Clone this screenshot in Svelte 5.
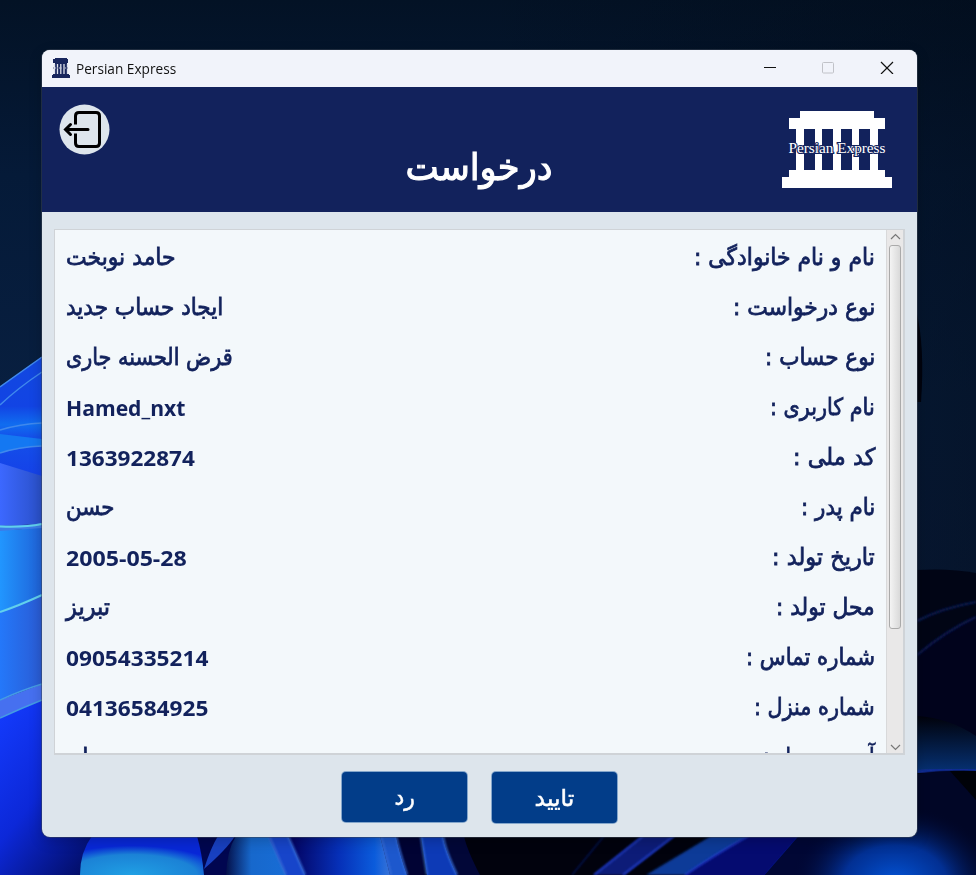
<script>
  const rows = [
    { label: 'نام و نام خانوادگی :', lw: 181, value: 'حامد نوبخت', vw: 110 },
    { label: 'نوع درخواست :', lw: 142, value: 'ایجاد حساب جدید', vw: 157 },
    { label: 'نوع حساب :', lw: 110, value: 'قرض الحسنه جاری', vw: 167 },
    { label: 'نام کاربری :', lw: 105, value: 'Hamed_nxt', vw: 119, latin: true },
    { label: 'کد ملی :', lw: 82, value: '1363922874', vw: 129, latin: true },
    { label: 'نام پدر :', lw: 74, value: 'حسن', vw: 48 },
    { label: 'تاریخ تولد :', lw: 103, value: '2005-05-28', vw: 121, latin: true },
    { label: 'محل تولد :', lw: 99, value: 'تبریز', vw: 44 },
    { label: 'شماره تماس :', lw: 129, value: '09054335214', vw: 142, latin: true },
    { label: 'شماره منزل :', lw: 121, value: '04136584925', vw: 142, latin: true },
    { label: 'آدرس منزل :', lw: 112, value: 'تهران', vw: 51 }
  ];

  // Condenses or widens a line of text to the given width.
  function fit(node, width) {
    node.style.transform = `scaleX(${width / node.offsetWidth})`;
  }
</script>

<div class="desktop">
  <svg class="wallpaper" width="976" height="875" viewBox="0 0 976 875">
    <defs>
      <linearGradient id="sky" x1="0" y1="0" x2="0" y2="1">
        <stop offset="0" stop-color="#031225" /><stop offset=".2" stop-color="#051a38" />
        <stop offset=".45" stop-color="#081f40" /><stop offset=".66" stop-color="#0a1e40" />
      </linearGradient>
      <linearGradient id="skyr" x1="0" x2="1">
        <stop offset=".5" stop-color="#020b18" stop-opacity="0" /><stop offset="1" stop-color="#020b18" stop-opacity=".5" />
      </linearGradient>
      <linearGradient id="p1" x1="0" y1="0" x2="0" y2="1">
        <stop offset="0" stop-color="#1248e0" /><stop offset=".4" stop-color="#1244e4" /><stop offset=".55" stop-color="#106df0" /><stop offset=".65" stop-color="#1450ea" /><stop offset="1" stop-color="#1540e8" />
      </linearGradient>
      <linearGradient id="p2" x1="0" x2="1"><stop offset="0" stop-color="#3c68ff" /><stop offset="1" stop-color="#2a50c8" /></linearGradient>
      <linearGradient id="p3" x1="0" x2="1"><stop offset="0" stop-color="#2196ff" /><stop offset="1" stop-color="#1f62d8" /></linearGradient>
      <linearGradient id="p4" x1="0" x2="1"><stop offset="0" stop-color="#2478fa" /><stop offset="1" stop-color="#2a5bd4" /></linearGradient>
      <linearGradient id="p5" x1="0" y1="0" x2=".8" y2="1">
        <stop offset="0" stop-color="#143cff" /><stop offset=".5" stop-color="#0c28d8" /><stop offset="1" stop-color="#020c60" />
      </linearGradient>
      <radialGradient id="teal" cx=".42" cy="1" r=".75"><stop offset="0" stop-color="#20a0e4" /><stop offset=".7" stop-color="#1b82d6" /><stop offset="1" stop-color="#0828d8" /></radialGradient>
      <linearGradient id="petal" x1="0" x2="1"><stop offset="0" stop-color="#04104a" /><stop offset=".3" stop-color="#1768cc" /><stop offset="1" stop-color="#1870dc" /></linearGradient>
      <linearGradient id="fold" x1="0" x2="1"><stop offset="0" stop-color="#03005c" /><stop offset=".5" stop-color="#0630b8" /><stop offset=".85" stop-color="#0b5cdc" /><stop offset="1" stop-color="#3974d8" /></linearGradient>
      <linearGradient id="arc" x1="0" y1="0" x2="0" y2="1"><stop offset="0" stop-color="#01020b" /><stop offset="1" stop-color="#063275" /></linearGradient>
      <radialGradient id="glow"><stop offset="0" stop-color="#0357dc" /><stop offset=".5" stop-color="#023aae" stop-opacity=".8" /><stop offset="1" stop-color="#010628" stop-opacity="0" /></radialGradient>
      <filter id="soft"><feGaussianBlur stdDeviation="1" /></filter>
    </defs>
    <rect width="976" height="875" fill="url(#sky)" />
    <rect width="976" height="875" fill="url(#skyr)" />
    <path d="M916 310Q925 345 921 402H916Z" fill="#01030d" />

    <path d="M0 387L42 357V480H0Z" fill="url(#p1)" />
    <path d="M0 434L42 439V446Q18 448 0 453Z" fill="#1478f2" />
    <path d="M0 463L42 476V524L0 526Z" fill="url(#p2)" />
    <path d="M0 530Q25 530 42 526V595L0 612Z" fill="url(#p3)" />
    <path d="M0 525Q25 526 42 523V528L0 531Z" fill="#3c7ce8" />
    <path d="M0 612L42 595V684L0 700Z" fill="url(#p4)" />
    <path d="M0 700L42 684V700L0 718Z" fill="#4670f0" />
    <path d="M0 718L42 700V820L110 837V875H0Z" fill="url(#p5)" />
    <g fill="none" stroke-width="1.5">
      <path d="M0 387L42 357M0 405Q18 388 42 372M0 430Q20 424 42 423M0 453Q18 447 42 446" stroke="#4089ed" />
      <path d="M0 526.500Q25 527.500 42 524M0 612Q18 606 42 595" stroke="#61d0ed" stroke-width="2" />
      <path d="M0 700Q22 690 42 684M0 718Q22 708 42 700" stroke="#459be4" />
    </g>

    <rect x="110" y="835" width="866" height="40" fill="#01020d" />
    <rect x="190" y="836" width="50" height="39" fill="#010650" />
    <path d="M92 836Q80 852 80 875H204Q202 853 197 836Z" fill="url(#teal)" />
    <path d="M236 836Q227 850 226 875H310L288 836Z" fill="url(#petal)" />
    <path d="M204 869Q211 847 218 836H235Q227 849 204 869Z" fill="#1840c0" />
    <path d="M268 836L286 875H305L288 836Z" fill="#1745ca" />
    <path d="M288 836L305 875H390L380 836Z" fill="url(#fold)" />
    <path d="M380 836L390 875H407Q399 852 396 836Z" fill="#1d58cd" />
    <path d="M396 836Q399 852 407 875H425Q421 850 421 836Z" fill="#010334" />
    <path d="M421 836L427 875H457Q445 850 443 836Z" fill="#0d3ab6" />
    <path d="M443 836Q445 850 457 875H480Q467 850 464 836Z" fill="#020738" />
    <g fill="none" stroke="#356ad5" stroke-width="2" filter="url(#soft)">
      <path d="M269 836L286 875M288 836L305 875M381 836L391 875M396 836Q399 850 407 875M421 836L427 875M443 836Q445 850 457 875" />
    </g>
    <path d="M643 836L594 875H624L674 836Z" fill="#081d78" filter="url(#soft)" />
    <path d="M711 836L646 875H686L748 836Z" fill="#0b3b98" filter="url(#soft)" />
    <path d="M748 836Q711 857 685 875H765L799 836Z" fill="#050b70" />
    <g fill="none" filter="url(#soft)">
      <path d="M643 836L594 875M674 836L623 875M748 836Q711 857 685 875" stroke="#233fd2" stroke-width="2" />
      <path d="M604 836L572 875M799 836L765 875" stroke="#101f8c" />
    </g>
    <path d="M799 836L765 875H976V836Z" fill="#010735" />

    <path d="M917 570Q949 568 976 573V875H917Z" fill="#010515" />
    <path d="M917 655Q947 630 976 617V740H917Z" fill="#01031c" />
    <path d="M917 621Q942 608 976 602M917 655Q947 630 976 617" fill="none" stroke="#0a1d55" stroke-width="2" filter="url(#soft)" />
    <path d="M917 716Q949 718 976 736V771Q940 769 917 773Z" fill="url(#arc)" />
    <path d="M917 772Q945 768 976 770" fill="none" stroke="#142b9b" stroke-width="3" filter="url(#soft)" />
    <path d="M917 774Q945 770 976 771V875H850V837H917Z" fill="#010626" />
    <ellipse cx="895" cy="885" rx="105" ry="80" fill="url(#glow)" />
    <path d="M950 771L976 800V771Z" fill="#000208" />
  </svg>

  <main class="window">
    <div class="titlebar">
      <svg class="mini" width="18" height="20" viewBox="0 0 18 20" fill="#18265d">
        <path d="M3 0H15V1H16V5H15V16H17V17H18V20H0V17H1V16H3V5H1V1H3Z" />
        <path d="M2.5 6V16M5.500 6V16M8.8 6V16M12 6V16M15.500 6V16" stroke="#dfe2ec" stroke-width="1.3" />
        <path d="M1 10H17" stroke="#9298b4" stroke-width="1.5" stroke-dasharray="1 1" />
      </svg>
      <div class="apptitle"><span use:fit={100}>Persian Express</span></div>
      <svg class="controls" width="132" height="14" viewBox="0 0 132 14" fill="none">
        <path d="M0 7.5H12" stroke="#111" />
        <rect x="58.5" y="2.5" width="11" height="10.5" rx="1" stroke="#c1c2c8" />
        <path d="M117 2L129 14M129 2L117 14" stroke="#111" stroke-width="1.2" />
      </svg>
    </div>

    <header>
      <svg class="exit" width="51" height="51" viewBox="59 104 51 51" fill="none" stroke="#000" stroke-width="3">
        <circle cx="84.5" cy="129.5" r="25" fill="#dde5ec" stroke="none" />
        <path d="M75.5 123V116Q75.5 112.5 79 112.5H96Q99.5 112.5 99.5 116V143Q99.5 146.5 96 146.5H79Q75.5 146.5 75.5 143V135" stroke-linecap="square" />
        <path d="M88 129.5H66M70.5 124.5L65.5 129.5L70.5 134.5" stroke-linecap="round" />
      </svg>
      <h1><span use:fit={147}>درخواست</span></h1>
      <svg class="logo" width="110" height="77" viewBox="782 111 110 77">
        <path fill="#fff" d="M800 111H874V118H885V129H878V170H885V177H892V188H782V177H789V170H796V129H789V118H800Z" />
        <path fill="#12225c" d="M804 129H815V170H804ZM822 129H833V170H822ZM841 129H852V170H841ZM859 129H870V170H859Z" />
        <text x="788.5" y="153" textLength="97" lengthAdjust="spacingAndGlyphs">Persian Express</text>
      </svg>
    </header>

    <section class="body">
      <div class="pane">
        <div class="list" dir="rtl">
          {#each rows as row}
            <div class="row">
              <span class="label" use:fit={row.lw}>{row.label}</span>
              <span class="value" class:latin={row.latin} use:fit={row.vw}>{row.value}</span>
            </div>
          {/each}
        </div>
        <div class="scroll">
          <svg width="15" height="15" viewBox="0 0 15 15"><path d="M3 9L7.5 4.5L12 9" /></svg>
          <div class="thumb"></div>
          <svg class="down" width="15" height="15" viewBox="0 0 15 15"><path d="M3 7L7.5 11.5L12 7" /></svg>
        </div>
      </div>
      <div class="actions">
        <button><span use:fit={20}>رد</span></button>
        <button class="ok"><span use:fit={40}>تایید</span></button>
      </div>
    </section>
  </main>
</div>

<style>
  :global(body) { margin: 0; }
  .desktop {
    position: relative;
    box-sizing: border-box;
    width: 976px;
    height: 875px;
    padding: 50px 0 0 42px;
    overflow: hidden;
    font-family: "Noto Sans", "DejaVu Sans", sans-serif;
  }
  .wallpaper { position: absolute; inset: 0; }
  .window {
    position: relative;
    display: flex;
    flex-direction: column;
    width: 875px;
    height: 787px;
    border-radius: 8px;
    overflow: hidden;
    background: #dde5ec;
    box-shadow: 0 0 0 1px #3c465680, 0 4px 14px #0003;
  }
  span { display: inline-block; white-space: nowrap; }
  .titlebar {
    display: flex;
    align-items: center;
    height: 37px;
    flex: none;
    padding: 0 21px 0 10px;
    background: #f1f3fa;
  }
  .mini { margin-top: -1px; }
  .apptitle { flex: 1; margin: -2px 0 0 6px; font: 15px/20px "Open Sans", sans-serif; color: #111; }
  .apptitle span { transform-origin: left; }
  .controls { margin-top: -3px; }
  header {
    display: flex;
    justify-content: space-between;
    height: 125px;
    flex: none;
    box-sizing: border-box;
    padding: 17px 25px 0 17px;
    background: #12225c;
  }
  .logo { margin-top: 7px; }
  .logo text {
    font: 15px "Liberation Serif", serif;
    fill: #fff;
    stroke: #12225c;
    stroke-width: 2.2px;
    paint-order: stroke;
  }
  h1 {
    margin: 42px 0 0 66px;
    font: 37px/44px "DejaVu Sans", sans-serif;
    color: #fff;
    -webkit-text-stroke: 1.1px #fff;
  }
  .body { flex: 1; padding: 17px 12px 0; }
  .pane {
    display: flex;
    box-sizing: border-box;
    width: 851px;
    height: 526px;
    border: 2px solid #cfd3d7;
    border-width: 1px 2px 2px 1px;
    overflow: hidden;
    background: #f3f8fb;
  }
  .list { flex: 1; padding: 2px 11px 0 11px; height: 521px; }
  .row {
    display: flex;
    justify-content: space-between;
    align-items: center;
    height: 50px;
    font: 23.5px/50px "DejaVu Sans", sans-serif;
    color: #12225c;
    -webkit-text-stroke: .8px #12225c;
  }
  .label { transform-origin: right; }
  .value { transform-origin: left; }
  .latin {
    font: bold 22px/48px "Open Sans", sans-serif;
    -webkit-text-stroke: 0;
  }
  .scroll {
    display: flex;
    flex-direction: column;
    align-items: center;
    width: 16px;
    flex: none;
    background: #e9e8e8;
    border-left: 1px solid #d8d9da;
  }
  .scroll path { fill: none; stroke: #777; stroke-width: 1.2; }
  .thumb {
    box-sizing: border-box;
    width: 12px;
    height: 384px;
    border: 1px solid #aaa;
    border-radius: 3px;
    background: linear-gradient(90deg, #f4f4f4, #d9d9d9);
  }
  .down { margin-top: auto; }
  .actions { display: flex; justify-content: center; gap: 25px; padding-top: 17px; }
  button {
    width: 125px;
    height: 50px;
    padding: 0;
    border: 0;
    border-radius: 4px;
    background: #023d89;
    box-shadow: 0 0 0 1px #2c67a980;
    color: #fff;
    font: 23px/48px "DejaVu Sans", sans-serif;
    -webkit-text-stroke: .5px #fff;
  }
  .ok { height: 51px; }
</style>
